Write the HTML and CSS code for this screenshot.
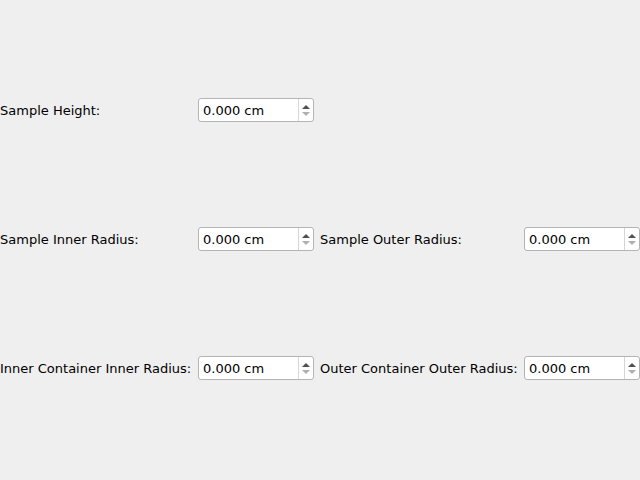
FILE: index.html
```html
<!DOCTYPE html>
<html>
<head>
<meta charset="utf-8">
<link rel="stylesheet" href="styles.css">
</head>
<body>
<div class="form">
  <div class="row">
    <div class="label l1">Sample Height:</div>
    <div class="spin"><span class="val">0.000 cm</span><span class="btns"><span class="up"></span><span class="down"></span></span></div>
  </div>
  <div class="row">
    <div class="label l1">Sample Inner Radius:</div>
    <div class="spin"><span class="val">0.000 cm</span><span class="btns"><span class="up"></span><span class="down"></span></span></div>
    <div class="label l2">Sample Outer Radius:</div>
    <div class="spin"><span class="val">0.000 cm</span><span class="btns"><span class="up"></span><span class="down"></span></span></div>
  </div>
  <div class="row">
    <div class="label l1">Inner Container Inner Radius:</div>
    <div class="spin"><span class="val">0.000 cm</span><span class="btns"><span class="up"></span><span class="down"></span></span></div>
    <div class="label l2">Outer Container Outer Radius:</div>
    <div class="spin"><span class="val">0.000 cm</span><span class="btns"><span class="up"></span><span class="down"></span></span></div>
  </div>
</div>
</body>
</html>
```
FILE: styles.css
```css
html, body {
  margin: 0;
  padding: 0;
  background: #efefef;
  width: 640px;
  height: 480px;
  overflow: hidden;
  font-family: "DejaVu Sans", sans-serif;
  font-size: 13px;
  color: #000;
}
.form {
  display: flex;
  flex-direction: column;
  gap: 105px;
  padding-top: 98px;
}
.row {
  display: flex;
  align-items: center;
  height: 24px;
}
.label {
  white-space: nowrap;
  padding-top: 1px;
}
.l1 { width: 198px; }
.l2 { width: 204px; margin-left: 6px; }
.spin {
  box-sizing: border-box;
  width: 116px;
  height: 24px;
  background: #fff;
  border: 1px solid #b4b4b4;
  border-radius: 3px;
  display: flex;
  align-items: stretch;
}
.val {
  flex: 1;
  padding-left: 4px;
  padding-top: 1px;
  line-height: 22px;
}
.btns {
  width: 14px;
  border-left: 1px solid #d6d6d6;
  display: flex;
  flex-direction: column;
  align-items: center;
  justify-content: center;
  gap: 3px;
}
.up {
  width: 0; height: 0;
  border-left: 4px solid transparent;
  border-right: 4px solid transparent;
  border-bottom: 4px solid #505050;
}
.down {
  width: 0; height: 0;
  border-left: 4px solid transparent;
  border-right: 4px solid transparent;
  border-top: 4px solid #b0b0b0;
}
```
